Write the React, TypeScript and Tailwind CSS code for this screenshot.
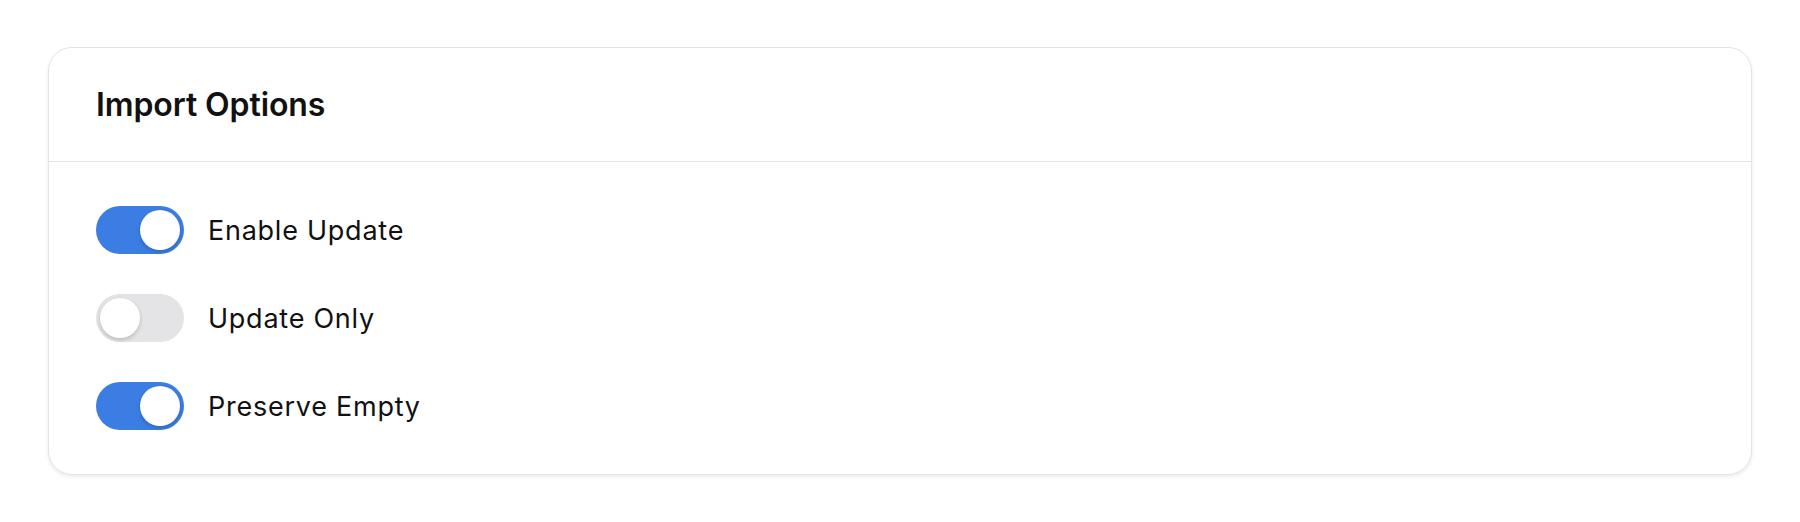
import React, { useState } from "react";

function Toggle({ on, onClick }: { on: boolean; onClick: () => void }) {
  return (
    <button
      type="button"
      onClick={onClick}
      className={
        "relative flex h-[48px] w-[88px] shrink-0 items-center rounded-full p-[4px] transition-colors " +
        (on ? "bg-[#3b7de3]" : "bg-[#e4e4e6]")
      }
    >
      <span
        className={
          "block h-[40px] w-[40px] rounded-full bg-white shadow-[0_2px_4px_rgba(0,0,0,0.18)] transition-transform " +
          (on ? "translate-x-[40px]" : "translate-x-0")
        }
      />
    </button>
  );
}

export default function App() {
  const [opts, setOpts] = useState([
    { label: "Enable Update", on: true },
    { label: "Update Only", on: false },
    { label: "Preserve Empty", on: true },
  ]);
  return (
    <div className="min-h-[522px] bg-white p-[48px] pt-[47px] font-['Inter',sans-serif]">
      <div className="rounded-[24px] border border-[#e4e4e7] bg-white shadow-[0_2px_4px_rgba(0,0,0,0.08)]">
        <div className="flex h-[114px] items-center border-b border-[#e4e4e7] px-[47px]">
          <h2 className="text-[32px] font-semibold tracking-[-0.1px] text-[#111111]">Import Options</h2>
        </div>
        <div className="flex flex-col gap-[40px] px-[47px] pt-[44px] pb-[44px]">
          {opts.map((o, i) => (
            <div key={o.label} className="flex items-center gap-[24px]">
              <Toggle
                on={o.on}
                onClick={() =>
                  setOpts((p) => p.map((x, j) => (j === i ? { ...x, on: !x.on } : x)))
                }
              />
              <span className="pt-[2px] text-[27px] tracking-[0.75px] text-[#111111]">{o.label}</span>
            </div>
          ))}
        </div>
      </div>
    </div>
  );
}
